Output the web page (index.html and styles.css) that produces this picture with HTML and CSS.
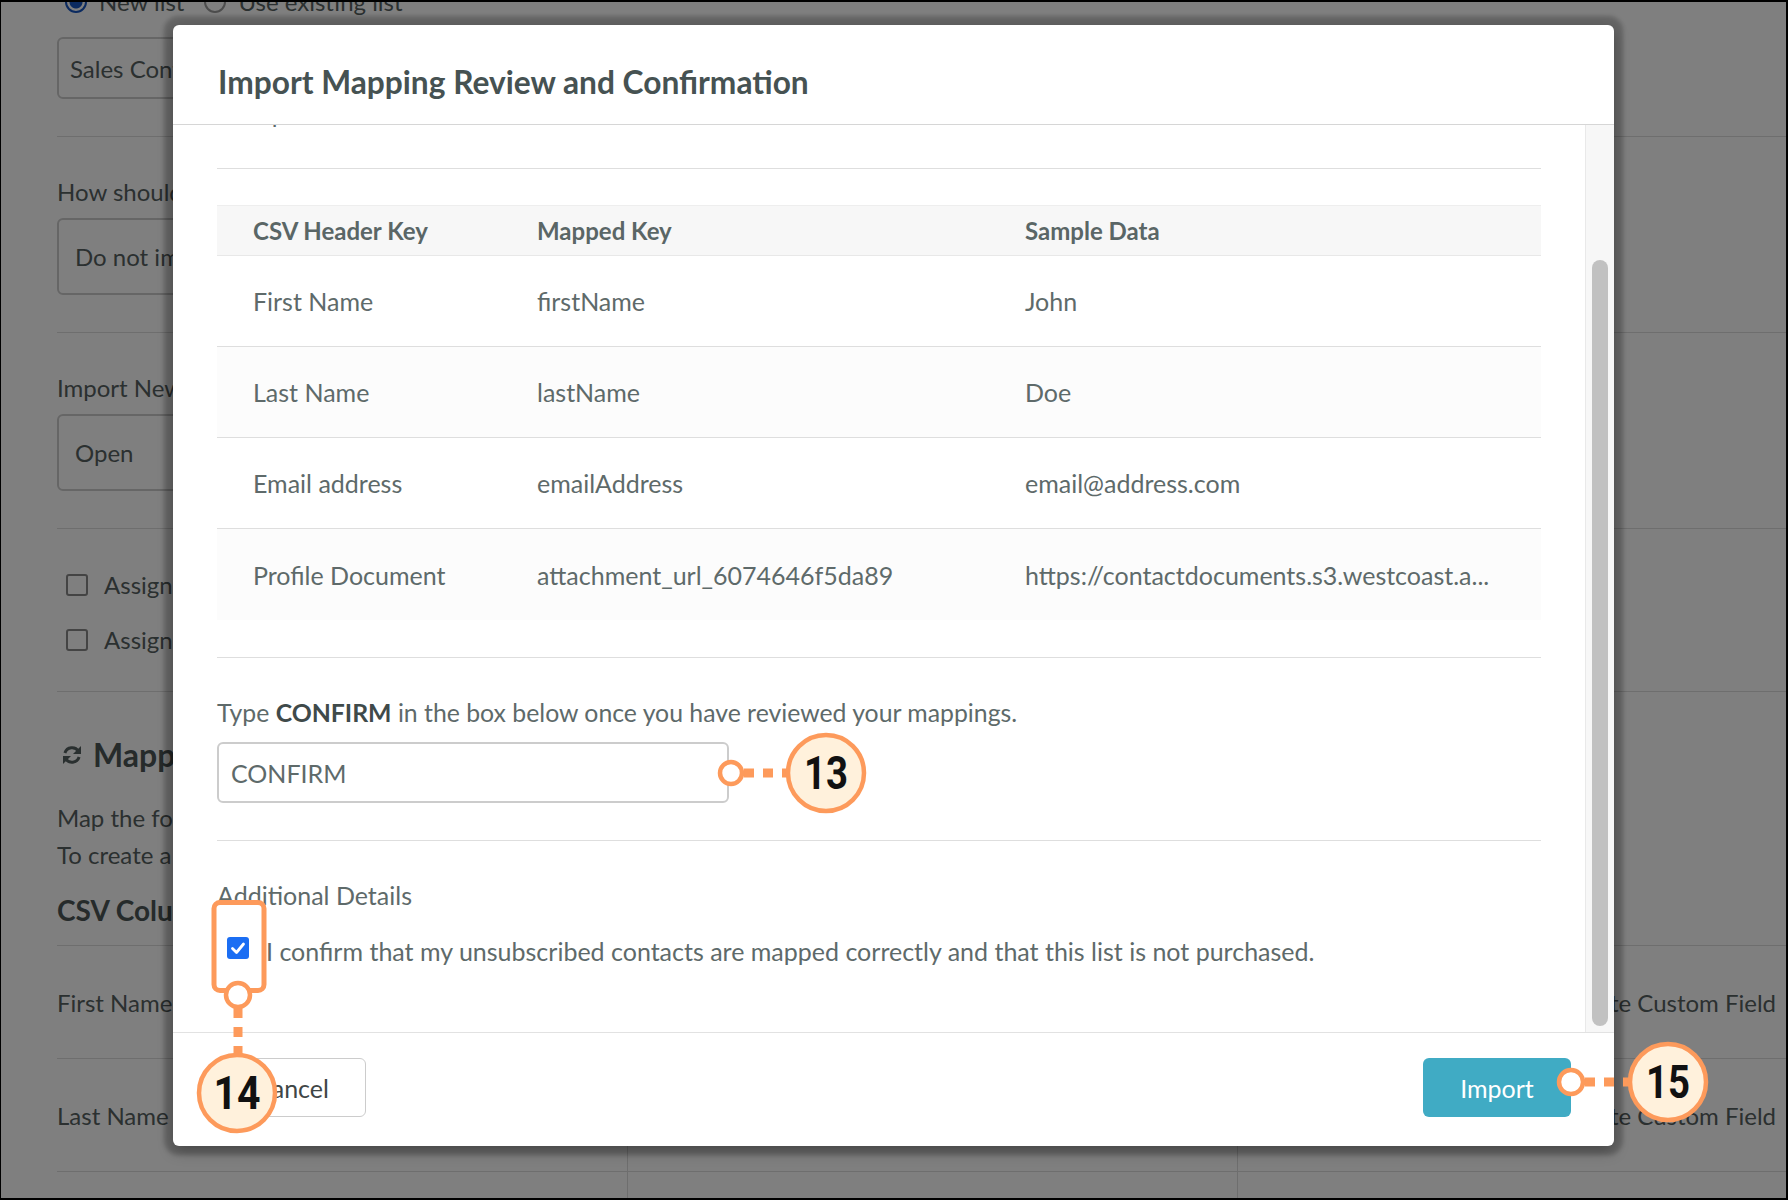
FILE: index.html
```html
<!DOCTYPE html>
<html lang="en">
<head>
  <meta charset="UTF-8">
  <meta name="viewport" content="width=device-width, initial-scale=1.0">
  <title>Import Mapping Review and Confirmation</title>
  <link rel="stylesheet" href="styles.css">
</head>
<body>
  <div class="screen">
    <div class="page">
      <div class="radio-row">
        <span class="radio on"></span><span class="radio-label">New list</span>
        <span class="radio"></span><span class="radio-label">Use existing list</span>
      </div>
      <div class="field field-name">Sales Contacts</div>
      <hr class="rule">
      <div class="label">How should we handle duplicate contacts?</div>
      <div class="field field-tall">Do not import duplicates</div>
      <hr class="rule">
      <div class="label">Import New Contacts as</div>
      <div class="field field-tall">Open</div>
      <hr class="rule">
      <div class="checks">
        <div class="check"><span class="box"></span>Assign contacts to a user</div>
        <div class="check"><span class="box"></span>Assign contacts to a company</div>
      </div>
      <hr class="rule">
      <h3 class="section-title">
        <svg class="refresh" viewBox="0 0 24 24" width="24" height="24">
          <path d="M18.5 8.5a7.5 7.5 0 0 0-13.6 1.5" fill="none" stroke="#556060" stroke-width="3"/>
          <path d="M5.5 15.5a7.5 7.5 0 0 0 13.6-1.5" fill="none" stroke="#556060" stroke-width="3"/>
          <path d="M21 3v8h-8z" fill="#556060"/>
          <path d="M3 21v-8h8z" fill="#556060"/>
        </svg>Mapping
      </h3>
      <p class="help">Map the following columns from your CSV file to contact fields.<br>To create a custom field, choose Create Custom Field.</p>
      <div class="col-title">CSV Column</div>
      <div class="bg-table">
        <div class="bg-row"><div>First Name</div><div></div><div class="end">Create Custom Field</div></div>
        <div class="bg-row"><div>Last Name</div><div></div><div class="end">Create Custom Field</div></div>
        <div class="bg-row"><div>Email address</div><div></div><div class="end">Create Custom Field</div></div>
      </div>
    </div>

    <div class="backdrop"></div>

    <div class="modal">
      <div class="modal-header">
        <h4 class="modal-title">Import Mapping Review and Confirmation</h4>
      </div>
      <div class="modal-body">
        <div class="modal-scroll">
          <p class="peek">Group</p>
          <hr class="divider first">
          <div class="map-table">
            <div class="map-row map-head"><div>CSV Header Key</div><div>Mapped Key</div><div>Sample Data</div></div>
            <div class="map-row"><div>First Name</div><div>firstName</div><div>John</div></div>
            <div class="map-row alt"><div>Last Name</div><div>lastName</div><div>Doe</div></div>
            <div class="map-row"><div>Email address</div><div>emailAddress</div><div>email@address.com</div></div>
            <div class="map-row alt last"><div>Profile Document</div><div>attachment_url_6074646f5da89</div><div>https://contactdocuments.s3.westcoast.a...</div></div>
          </div>
          <hr class="divider after-table">
          <p class="hint">Type <strong>CONFIRM</strong> in the box below once you have reviewed your mappings.</p>
          <div class="confirm-input">CONFIRM</div>
          <hr class="divider after-input">
          <div class="details-title">Additional Details</div>
          <div class="confirm-check">
            <span class="tick">
              <svg viewBox="0 0 22 22" width="22" height="22"><path d="M5.5 11.5l4 4 7-8.5" fill="none" stroke="#fff" stroke-width="2.8" stroke-linecap="round" stroke-linejoin="round"/></svg>
            </span>
            I confirm that my unsubscribed contacts are mapped correctly and that this list is not purchased.
          </div>
        </div>
        <div class="scrollbar"><div class="thumb"></div></div>
      </div>
      <div class="modal-footer">
        <button class="btn btn-cancel">Cancel</button>
        <button class="btn btn-import">Import</button>
      </div>
    </div>

    <svg class="callouts" width="1788" height="1200" viewBox="0 0 1788 1200">
      <g stroke="#fd9a5b" fill="none">
        <line x1="744" y1="773" x2="790" y2="773" stroke-width="9" stroke-dasharray="10 9"/>
        <line x1="238" y1="1008" x2="238" y2="1056" stroke-width="9" stroke-dasharray="10 9"/>
        <line x1="1585" y1="1082" x2="1632" y2="1082" stroke-width="9" stroke-dasharray="10 9"/>
        <rect x="214" y="902.5" width="50" height="88" rx="6" stroke-width="5"/>
      </g>
      <g stroke="#fd9a5b" stroke-width="4.5" fill="#fff">
        <circle cx="731" cy="773" r="11"/>
        <circle cx="238" cy="995" r="12"/>
        <circle cx="1571" cy="1082" r="12"/>
      </g>
      <g stroke="#fd9a5b" stroke-width="4.5" fill="#fff1dc">
        <circle cx="826" cy="773" r="38"/>
        <circle cx="237" cy="1093" r="38"/>
        <circle cx="1668" cy="1082" r="38"/>
      </g>
      <g class="num">
        <text x="826" y="789" text-anchor="middle" textLength="44" lengthAdjust="spacingAndGlyphs">13</text>
        <text x="237" y="1109" text-anchor="middle" textLength="47" lengthAdjust="spacingAndGlyphs">14</text>
        <text x="1668" y="1098" text-anchor="middle" textLength="44" lengthAdjust="spacingAndGlyphs">15</text>
      </g>
    </svg>
  </div>
</body>
</html>
```

FILE: styles.css
```css
* {
  box-sizing: border-box;
}
body {
  margin: 0;
  padding: 2px 2px 2px 1px;
  background: #000;
  font-family: "Lato", "Liberation Sans", sans-serif;
}
.screen {
  position: relative;
  width: 1785px;
  height: 1196px;
  overflow: hidden;
  background: #fff;
}

/* page under the dialog */
.page {
  padding-left: 56px;
  font-size: 24px;
  color: #566161;
}
.radio-row {
  display: flex;
  align-items: center;
  height: 28px;
  margin-top: -14px;
  line-height: 28px;
}
.radio {
  width: 22px;
  height: 22px;
  border-radius: 50%;
  border: 2px solid #999;
  margin-left: 8px;
  margin-right: 12px;
}
.radio.on {
  border-color: #1655c0;
  background: radial-gradient(circle, #1655c0 0 6px, #fff 7px);
}
.radio-label {
  margin-right: 12px;
}
.field {
  width: 620px;
  border: 2px solid #ccc;
  border-radius: 6px;
  display: flex;
  align-items: center;
  padding: 0 16px;
}
.field-name {
  margin-top: 21px;
  height: 62px;
  padding: 0 11px;
}
.field-tall {
  margin-top: 11px;
  height: 77px;
}
.rule {
  margin: 37px 0 0;
  border: 0;
  border-top: 1px solid #ddd;
}
.label {
  margin-top: 40px;
  line-height: 30px;
}
.checks {
  margin-top: 28px;
}
.check {
  display: flex;
  align-items: center;
  height: 55px;
}
.box {
  width: 22px;
  height: 22px;
  border: 2px solid #888;
  border-radius: 3px;
  margin: 0 16px 0 9px;
}
.checks + .rule {
  margin-top: 24px;
}
.section-title {
  margin: 43px 0 0;
  font-size: 32px;
  line-height: 40px;
  color: #4c5656;
  display: flex;
  align-items: center;
}
.refresh {
  margin: 0 9px 0 3px;
}
.help {
  margin: 24px 0 0;
  line-height: 37px;
}
.col-title {
  margin-top: 19px;
  font-size: 28px;
  font-weight: 700;
  line-height: 36px;
  color: #4c5656;
}
.bg-table {
  margin-top: 17px;
  border-top: 1px solid #ddd;
}
.bg-row {
  display: grid;
  grid-template-columns: 570px 610px 1fr;
  height: 113px;
  border-bottom: 1px solid #ddd;
}
.bg-row > div {
  display: flex;
  align-items: center;
}
.bg-row > div + div {
  border-left: 1px solid #ddd;
}
.bg-row .end {
  justify-content: flex-end;
  padding-right: 10px;
}
.backdrop {
  position: absolute;
  inset: 0;
  background: rgba(0, 0, 0, 0.5);
}

/* dialog */
.modal {
  position: absolute;
  left: 172px;
  top: 23px;
  width: 1441px;
  height: 1121px;
  background: #fff;
  border-radius: 6px;
  box-shadow: 0 0 4px 9px rgba(0, 0, 0, 0.2), 0 5px 15px rgba(0, 0, 0, 0.3);
  display: flex;
  flex-direction: column;
  color: #5e6a6a;
  font-size: 25px;
}
.modal-header {
  height: 100px;
  padding: 39px 45px 0;
  border-bottom: 1px solid #d6d6d6;
}
.modal-title {
  margin: 0;
  font-size: 31.7px;
  font-weight: 700;
  line-height: 37px;
  color: #465252;
}
.modal-body {
  display: flex;
  height: 907px;
}
.modal-scroll {
  flex: 1;
  overflow: hidden;
  padding: 0 44px;
}
.peek {
  margin: -27px 0 0;
  line-height: 30px;
}
.divider {
  margin: 0;
  border: 0;
  border-top: 1px solid #dedede;
}
.divider.first {
  margin-top: 40px;
}
.map-table {
  margin-top: 36px;
}
.map-row {
  display: grid;
  grid-template-columns: 284px 488px 1fr;
  height: 91px;
  align-items: center;
  border-bottom: 1px solid #dedede;
}
.map-row > div {
  padding: 0 36px;
  white-space: nowrap;
  overflow: hidden;
}
.map-head {
  height: 51px;
  background: #f7f7f7;
  border-top: 1px solid #eeeeee;
  border-bottom-color: #e8e8e8;
  font-size: 24px;
  font-weight: 700;
  color: #5a6666;
}
.map-row.alt {
  background: #fcfcfc;
}
.map-row.last {
  border-bottom: 0;
}
.divider.after-table {
  margin-top: 37px;
}
.hint {
  margin: 40px 0 0;
  line-height: 30px;
  font-size: 24.8px;
}
.hint strong {
  color: #3f4a4a;
}
.confirm-input {
  margin-top: 14px;
  width: 512px;
  height: 61px;
  border: 2px solid #cccccc;
  border-radius: 6px;
  padding: 0 12px;
  display: flex;
  align-items: center;
  color: #5e6a6a;
}
.divider.after-input {
  margin-top: 37px;
}
.details-title {
  margin-top: 39px;
  line-height: 30px;
}
.confirm-check {
  margin-top: 26px;
  display: flex;
  align-items: center;
  line-height: 30px;
}
.tick {
  width: 22px;
  height: 22px;
  margin: -6px 17px 0 10px;
  border-radius: 3px;
  background: #1b6ef3;
  display: flex;
}
.scrollbar {
  width: 29px;
  background: #f7f7f7;
  border-left: 1px solid #e9e9e9;
  padding: 135px 6px 6px;
}
.thumb {
  height: 766px;
  border-radius: 8px;
  background: #c1c1c1;
}
.modal-footer {
  height: 114px;
  border-top: 1px solid #e2e2e2;
  padding: 25px 43px 0 45px;
  display: flex;
  justify-content: space-between;
  align-items: flex-start;
}
.btn {
  width: 148px;
  height: 59px;
  border-radius: 6px;
  font-family: "Lato", "Liberation Sans", sans-serif;
  font-size: 25px;
}
.btn-cancel {
  background: #fff;
  border: 1px solid #cccccc;
  color: #3f4646;
}
.btn-import {
  background: #40abc4;
  border: 0;
  color: #fff;
}

/* numbered annotations */
.callouts {
  position: absolute;
  left: -1px;
  top: -2px;
}
.num text {
  font-family: "Roboto", "DejaVu Sans", sans-serif;
  font-weight: 700;
  font-size: 46px;
  fill: #111;
}
```
